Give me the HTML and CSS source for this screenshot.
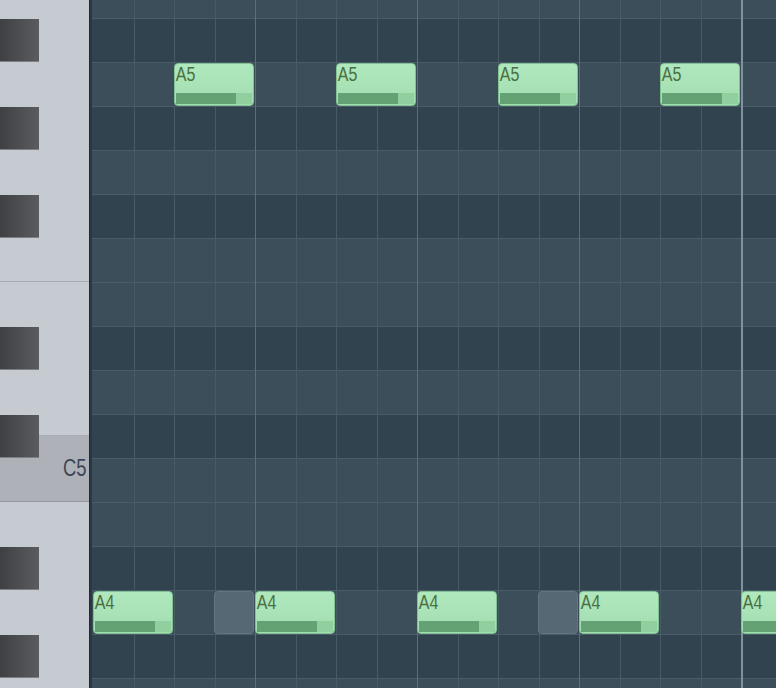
FILE: index.html
```html
<!DOCTYPE html>
<html lang="en">
<head>
  <meta charset="UTF-8">
  <title>Piano Roll</title>
  <link rel="stylesheet" href="styles.css">
</head>
<body>

<div class="roll">
  <!-- keyboard -->
  <div class="keys">
    <div class="white" style="height: 282px;"></div>
    <div class="white" style="height: 154px;"></div>
    <div class="white c-key"><span class="key-label">C5</span></div>
    <div class="white rest"></div>

    <div class="black" style="top: 19px;"></div>
    <div class="black" style="top: 107px;"></div>
    <div class="black" style="top: 195px;"></div>
    <div class="black" style="top: 327px;"></div>
    <div class="black" style="top: 415px;"></div>
    <div class="black" style="top: 547px;"></div>
    <div class="black" style="top: 635px;"></div>
  </div>

  <!-- note grid -->
  <div class="grid">
    <div class="rows">
      <div class="row light"></div> <!-- B5 -->
      <div class="row dark"></div>  <!-- A#5 -->
      <div class="row light"></div> <!-- A5 -->
      <div class="row dark"></div>  <!-- G#5 -->
      <div class="row light"></div> <!-- G5 -->
      <div class="row dark"></div>  <!-- F#5 -->
      <div class="row light"></div> <!-- F5 -->
      <div class="row light"></div> <!-- E5 -->
      <div class="row dark"></div>  <!-- D#5 -->
      <div class="row light"></div> <!-- D5 -->
      <div class="row dark"></div>  <!-- C#5 -->
      <div class="row light"></div> <!-- C5 -->
      <div class="row light"></div> <!-- B4 -->
      <div class="row dark"></div>  <!-- A#4 -->
      <div class="row light"></div> <!-- A4 -->
      <div class="row dark"></div>  <!-- G#4 -->
      <div class="row light"></div> <!-- G4 -->
    </div>

    <div class="cols">
      <div class="col"></div><div class="col"></div><div class="col"></div><div class="col"></div>
      <div class="col beat"></div><div class="col"></div><div class="col"></div><div class="col"></div>
      <div class="col beat"></div><div class="col"></div><div class="col"></div><div class="col"></div>
      <div class="col beat"></div><div class="col"></div><div class="col"></div><div class="col"></div>
      <div class="col bar"></div>
    </div>

    <!-- A5 -->
    <div class="note" style="left: 82px; top: 63px;"><span class="note-name">A5</span><div class="vel"><div class="vel-fill" style="width: 79%;"></div></div></div>
    <div class="note" style="left: 244px; top: 63px;"><span class="note-name">A5</span><div class="vel"><div class="vel-fill" style="width: 79%;"></div></div></div>
    <div class="note" style="left: 406px; top: 63px;"><span class="note-name">A5</span><div class="vel"><div class="vel-fill" style="width: 79%;"></div></div></div>
    <div class="note" style="left: 568px; top: 63px;"><span class="note-name">A5</span><div class="vel"><div class="vel-fill" style="width: 79%;"></div></div></div>

    <!-- A4 -->
    <div class="note" style="left: 1px; top: 591px;"><span class="note-name">A4</span><div class="vel"><div class="vel-fill" style="width: 79%;"></div></div></div>
    <div class="ghost" style="left: 122px; top: 591px;"></div>
    <div class="note" style="left: 163px; top: 591px;"><span class="note-name">A4</span><div class="vel"><div class="vel-fill" style="width: 79%;"></div></div></div>
    <div class="note" style="left: 325px; top: 591px;"><span class="note-name">A4</span><div class="vel"><div class="vel-fill" style="width: 79%;"></div></div></div>
    <div class="ghost" style="left: 446px; top: 591px;"></div>
    <div class="note" style="left: 487px; top: 591px;"><span class="note-name">A4</span><div class="vel"><div class="vel-fill" style="width: 79%;"></div></div></div>
    <div class="note" style="left: 649px; top: 591px;"><span class="note-name">A4</span><div class="vel"><div class="vel-fill" style="width: 79%;"></div></div></div>
  </div>
</div>

</body>
</html>
```

FILE: styles.css
```css
* {
  box-sizing: border-box;
}

body {
  margin: 0;
  background: #33444f;
  font-family: "Liberation Sans", Arial, sans-serif;
  overflow: hidden;
}

.roll {
  display: flex;
  width: 776px;
  height: 688px;
  overflow: hidden;
}

/* keyboard */

.keys {
  position: relative;
  width: 90px;
  flex-shrink: 0;
  background: #c6cad1;
  border-right: 1px solid #1f2a31;
}

.white {
  border-bottom: 1px solid #a8acb2;
}

.c-key {
  height: 66px;
  background: #aeb1b7;
  border-bottom: 1px solid #95999f;
  display: flex;
  align-items: center;
  justify-content: flex-end;
  padding-right: 3px;
}

.rest {
  border-bottom: none;
}

.key-label {
  font-size: 23px;
  line-height: 24px;
  color: #3d4753;
  transform: scaleX(0.8);
  transform-origin: right center;
  margin-top: -1px;
}

.black {
  position: absolute;
  left: 0;
  width: 39px;
  height: 43px;
  background: linear-gradient(to right, #3f4043, #5b5c5f);
  border-bottom: 1px solid #7c7f84;
}

/* grid */

.grid {
  position: relative;
  flex: 1;
  overflow: hidden;
  border-left: 2px solid #2b3942;
}

.rows {
  margin-top: -26px;
}

.row {
  height: 44px;
  border-top: 1px solid #4a5c68;
}

.row.light {
  background: #3b4e5a;
}

.row.dark {
  background: #324350;
}

.cols {
  position: absolute;
  top: 0;
  left: 1px;
  bottom: 0;
  display: grid;
  grid-template-columns: repeat(17, 40.5px);
}

.col {
  border-left: 1px solid #485a66;
}

.col:first-child {
  border-left: none;
}

.col.beat {
  border-left-color: #5b6e7a;
}

.col.bar {
  border-left: 2px solid #8092a0;
}

/* notes */

.note {
  position: absolute;
  width: 80px;
  height: 43px;
  border: 1px solid #82c292;
  border-radius: 4px;
  background: linear-gradient(#afe8bc, #a2ddb0);
}

.note-name {
  display: block;
  padding-left: 1px;
  font-size: 20px;
  line-height: 20px;
  color: #4b7043;
  transform: scaleX(0.8);
  transform-origin: left top;
}

.vel {
  position: absolute;
  left: 1px;
  right: 1px;
  bottom: 1px;
  height: 11px;
  background: #92cf9f;
}

.vel-fill {
  height: 100%;
  background: #64a273;
}

.ghost {
  position: absolute;
  width: 40px;
  height: 43px;
  background: #566874;
  border: 1px solid #637580;
  border-radius: 4px;
}
```
